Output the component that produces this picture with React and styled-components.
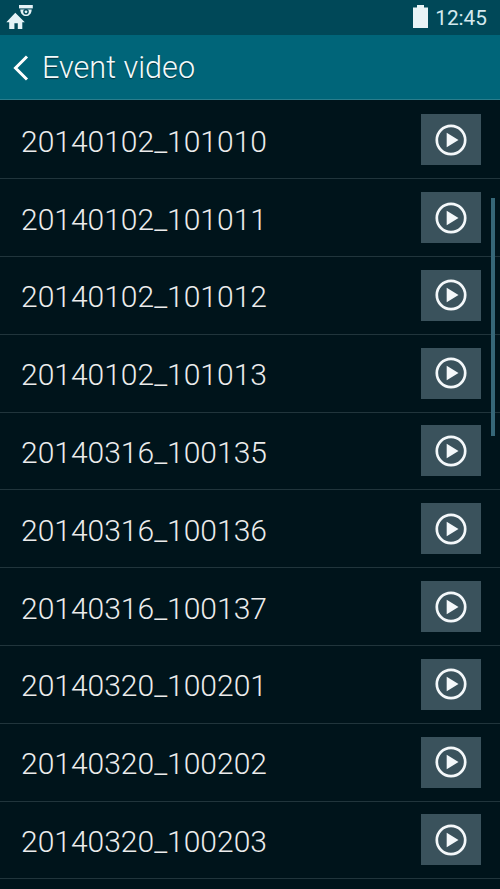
import React from 'react';
import styled, { createGlobalStyle } from 'styled-components';

const videos = [
  '20140102_101010',
  '20140102_101011',
  '20140102_101012',
  '20140102_101013',
  '20140316_100135',
  '20140316_100136',
  '20140316_100137',
  '20140320_100201',
  '20140320_100202',
  '20140320_100203',
];

const HomeCameraIcon = () => (
  <svg width="28" height="26" viewBox="0 0 28 26" fill="#e4f2f6">
    <path d="M9.3 8.7 L18.8 18.2 H16.3 V25 H11.8 V19.3 H8.4 V25 H3.2 V18.2 H0.3 Z" />
    <path d="M13 1 H26.8 V4.4 H13 Z" />
    <path d="M14.3 5.4 H25.7 C25.5 9.5 23.3 12 20 12 C16.7 12 14.5 9.5 14.3 5.4 Z" />
    <circle cx="20" cy="7.8" r="2.8" fill="#00485a" />
    <circle cx="20" cy="7.8" r="1.4" />
  </svg>
);

const BatteryIcon = () => (
  <svg width="15" height="23" viewBox="0 0 15 23" fill="#e9f3f6">
    <path d="M4 0 H11 V2.5 H15 V23 H0 V2.5 H4 Z" />
  </svg>
);

const BackIcon = () => (
  <svg width="16" height="26" viewBox="0 0 16 26">
    <path d="M14 1.5 L2.5 13 L14 24.5" fill="none" stroke="#fff" strokeWidth="3" />
  </svg>
);

const PlayIcon = () => (
  <svg width="32" height="32" viewBox="0 0 32 32">
    <circle cx="16" cy="16" r="14.2" fill="none" stroke="#f4f8fa" strokeWidth="2.7" />
    <path d="M11.7 8.8 L23.5 16 L11.7 23.2 Z" fill="#f4f8fa" />
  </svg>
);

const App = () => {
  return (
    <>
      <GlobalStyle />
      <Screen>
        <StatusBar>
          <HomeCameraIcon />
          <StatusRight>
            <BatteryIcon />
            <Clock>12:45</Clock>
          </StatusRight>
        </StatusBar>
        <Header>
          <BackButton aria-label="Back">
            <BackIcon />
          </BackButton>
          <Title>Event video</Title>
        </Header>
        <List>
          {videos.map((name) => (
            <Row key={name}>
              <Name>{name}</Name>
              <PlayButton aria-label="Play">
                <PlayIcon />
              </PlayButton>
            </Row>
          ))}
          <ScrollThumb />
        </List>
      </Screen>
    </>
  );
};

const GlobalStyle = createGlobalStyle`
  * {
    box-sizing: border-box;
  }
  body {
    margin: 0;
    overflow: hidden;
    background: #00141b;
    font-family: Roboto, 'Liberation Sans', sans-serif;
  }
`;

const Screen = styled.div`
  display: flex;
  flex-direction: column;
  width: 500px;
  height: 889px;
  overflow: hidden;
  background: #00141b;
`;

const StatusBar = styled.div`
  flex: none;
  display: flex;
  justify-content: space-between;
  height: 35px;
  padding: 4px 13px 0 6px;
  background: #004858;
`;

const StatusRight = styled.div`
  display: flex;
  align-items: flex-start;
  gap: 7px;
  padding-top: 1px;
`;

const Clock = styled.span`
  color: #d5e9ee;
  font-size: 20.8px;
  line-height: 25px;
  padding-top: 1px;
`;

const Header = styled.div`
  flex: none;
  display: flex;
  align-items: center;
  height: 65px;
  padding: 0 0 0 13px;
  background: #006579;
  border-bottom: 1px solid #2a7d8c;
`;

const BackButton = styled.button`
  display: flex;
  width: 16px;
  padding: 0;
  margin: 1px 13px 0 0;
  border: none;
  background: transparent;
  cursor: pointer;
`;

const Title = styled.h1`
  margin: 0;
  padding-top: 1px;
  color: #f2fafb;
  font-size: 30.6px;
  font-weight: 300;
  line-height: 36px;
  text-shadow: 0 1px 1px rgba(0, 0, 0, 0.5);
`;

const List = styled.div`
  position: relative;
  flex: none;
  padding-top: 1.4px;
`;

const Row = styled.div`
  display: flex;
  align-items: center;
  justify-content: space-between;
  height: 77.8px;
  padding: 0 19px 0 21px;
  border-bottom: 1px solid #21353c;
`;

const Name = styled.span`
  color: #ececec;
  font-size: 30px;
  font-weight: 300;
  line-height: 36px;
  padding-top: 4px;
`;

const PlayButton = styled.button`
  display: flex;
  align-items: center;
  justify-content: center;
  width: 60px;
  height: 51px;
  padding: 0;
  border: none;
  background: #3a525c;
  cursor: pointer;
`;

const ScrollThumb = styled.div`
  position: absolute;
  top: 98px;
  right: 5px;
  width: 4px;
  height: 238px;
  background: #366778;
`;

export default App;
